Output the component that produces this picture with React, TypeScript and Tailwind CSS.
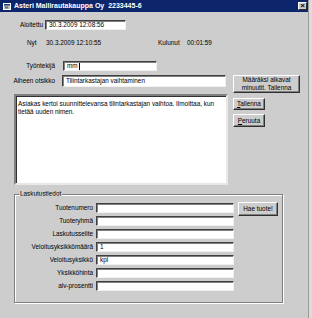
import React from "react";

const inputCls =
  "bg-white border border-t-[#404040] border-l-[#404040] border-b-[#f0f0f0] border-r-[#f0f0f0] shadow-[inset_1px_1px_0_#808080] flex items-center pl-[3px] overflow-hidden whitespace-nowrap";
const btnCls =
  "bg-[#cdcdcd] border border-t-white border-l-white border-b-[#303030] border-r-[#303030] shadow-[inset_-1px_-1px_0_#808080] flex items-center justify-center text-center";

function GroupRow({ label, value, children }: { label: string; value?: string; children?: React.ReactNode }) {
  return (
    <div className="flex h-[10px] items-start">
      <div className="w-[78px] text-right h-[10px] flex items-center justify-end">{label}</div>
      <div className={`ml-[3px] w-[138px] h-[10px] ${inputCls}`}>{value}</div>
      {children}
    </div>
  );
}

export default function App() {
  return (
    <div className="w-[312px] h-[318px] bg-[#cdcdcd] flex overflow-hidden font-['Liberation_Sans',Arial,sans-serif] text-[6.4px] leading-[8px] text-black">
      <div className="w-[308px] flex flex-col">
        {/* Title bar */}
        <div className="h-[12px] bg-[#0c256b] flex items-center">
          <svg width="8" height="8" viewBox="0 0 8 8" className="ml-[3px]">
            <rect x="0.5" y="1.5" width="7" height="6" fill="#c0c0c0" stroke="#fff" strokeWidth="1" />
            <rect x="1" y="2" width="6" height="1.5" fill="#1a3c8a" />
            <rect x="2" y="4.5" width="3" height="2" fill="#6a6a6a" />
          </svg>
          <span className="ml-[3px] text-white font-bold text-[7px] leading-[10px] whitespace-pre">
            Asteri Mallirautakauppa Oy  2233445-6
          </span>
          <div className="ml-auto mr-[1px] w-[9px] h-[8px] bg-[#cdcdcd] border border-t-white border-l-white border-b-[#303030] border-r-[#303030] flex items-center justify-center text-[8px] leading-[6px] font-bold">
            ×
          </div>
        </div>

        {/* Row 1 */}
        <div className="mt-[8px] flex items-center h-[10px]">
          <div className="w-[43px] text-right">Aloitettu</div>
          <div className={`ml-[2px] w-[81px] h-[10px] ${inputCls}`}>30.3.2009 12:08:56</div>
        </div>

        {/* Row 2 */}
        <div className="mt-[8px] flex items-center h-[10px] whitespace-nowrap">
          <div className="pl-[27px] w-[46px]">Nyt</div>
          <div className="w-[112px]">30.3.2009 12:10:55</div>
          <div className="w-[29px]">Kulunut</div>
          <div>00:01:59</div>
        </div>

        {/* Row 3 */}
        <div className="mt-[13px] flex items-center h-[10px]">
          <div className="w-[55px] text-right">Työntekijä</div>
          <div className={`ml-[8px] w-[94px] h-[10px] ${inputCls}`}>
            mm<span className="inline-block w-[1px] h-[7px] bg-black ml-[1px]" />
          </div>
        </div>

        {/* Row 4 block */}
        <div className="mt-[4px] flex">
          <div className="w-[228px] flex flex-col">
            <div className="flex items-center h-[12px]">
              <div className="w-[55px] text-right whitespace-nowrap">Aiheen otsikko</div>
              <div className={`ml-[7px] w-[164px] h-[12px] ${inputCls}`}>Tilintarkastajan vaihtaminen</div>
            </div>
            <div className="mt-[7px] ml-[14px] w-[214px] h-[91px] bg-white border-2 border-t-[#808080] border-l-[#808080] border-b-[#e8e8e8] border-r-[#e8e8e8] shadow-[inset_1px_1px_0_#303030] pl-[2px] pt-[4px]">
              Asiakas kertoi suunnittelevansa tilintarkastajan vaihtoa. Ilmoittaa, kun tietää uuden nimen.
            </div>
          </div>
          <div className="ml-[5px] flex flex-col">
            <div className={`w-[67px] h-[18px] ${btnCls}`}>
              Määräksi alkavat
              <br />
              minuutit. Tallenna
            </div>
            <div className={`mt-[5px] w-[32px] h-[12px] ${btnCls}`}>
              <span>
                <span className="underline">T</span>allenna
              </span>
            </div>
            <div className={`mt-[4px] w-[32px] h-[13px] ${btnCls}`}>
              <span>
                <span className="underline">P</span>eruuta
              </span>
            </div>
          </div>
        </div>

        {/* Group box */}
        <fieldset className="mt-[5px] ml-[14px] w-[269px] h-[113px] border border-[#808080] shadow-[inset_1px_1px_0_#fff,1px_1px_0_#fff] pt-[5px]">
          <legend className="ml-[4px] px-[1px] leading-[8px]">Laskutustiedot</legend>
          <div className="flex flex-col gap-[3px]">
            <GroupRow label="Tuotenumero">
              <div className={`ml-[4px] -mt-[1px] w-[40px] h-[14px] shrink-0 ${btnCls}`}>Hae tuote!</div>
            </GroupRow>
            <GroupRow label="Tuoteryhmä" />
            <GroupRow label="Laskutusselite" />
            <GroupRow label="Veloitusyksikkömäärä" value="1" />
            <GroupRow label="Veloitusyksikkö" value="kpl" />
            <GroupRow label="Yksikköhinta" />
            <GroupRow label="alv-prosentti" />
          </div>
        </fieldset>
      </div>
      <div className="w-[1px] h-full bg-[#9a9a9a]" />
      <div className="w-[3px] h-full bg-[#dcdcdc]" />
    </div>
  );
}
